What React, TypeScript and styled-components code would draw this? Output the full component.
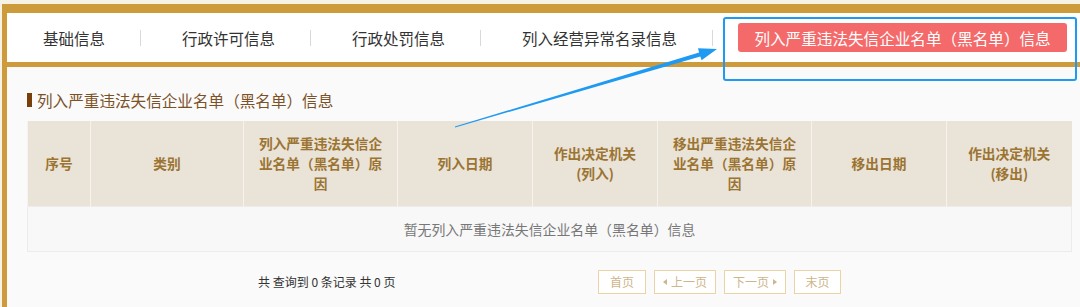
import {Fragment} from 'react';
import styled, {createGlobalStyle} from 'styled-components';

const GlobalStyle = createGlobalStyle`
  html, body {
    margin: 0;
    padding: 0;
    background: #f7f2e6;
    overflow: hidden;
  }
  body {
    font-family: "Noto Sans CJK SC", "Liberation Sans", sans-serif;
    color: #333;
  }
`;

const Page = styled.div`
  position: relative;
  width: 1080px;
  height: 307px;
  padding: 4px 0 0 2px;
  box-sizing: border-box;
`;

const Panel = styled.div`
  border-top: 9px solid #cd9b3b;
  border-left: 5px solid #cd9b3b;
  background: #fafafa;
  height: 100%;
  box-sizing: border-box;
`;

const TabBar = styled.div`
  display: flex;
  align-items: center;
  height: 49px;
  background: #fff;
  border-bottom: 5px solid #cd9b3b;
`;

const Tab = styled.div<{$first?: boolean}>`
  font-size: 15.5px;
  line-height: 20px;
  color: #333;
  white-space: nowrap;
  padding: 0 35px 0 ${p => (p.$first ? '36px' : '41px')};
`;

const Divider = styled.span`
  width: 1px;
  height: 16px;
  background: #d9d9d9;
`;

const ActiveTab = styled.div`
  margin-left: 25px;
  width: 329px;
  height: 29px;
  border-radius: 3px;
  background: #f46a6a;
  color: #fff;
  font-size: 15.6px;
  display: flex;
  align-items: center;
  justify-content: center;
  white-space: nowrap;
`;

const Content = styled.div`
  padding: 23px 9px 0 20px;
`;

const Title = styled.div`
  display: flex;
  align-items: center;
  gap: 5px;
  font-size: 15.6px;
  line-height: 20px;
  color: #7b5128;
  margin-bottom: 11px;
`;

const Marker = styled.span`
  width: 5px;
  height: 14px;
  background: #7a3f08;
`;

const Table = styled.table`
  width: 1044px;
  border-collapse: collapse;
  table-layout: fixed;
`;

const Th = styled.th<{$w: number}>`
  width: ${p => p.$w}px;
  height: 85px;
  padding: 0 12px;
  box-sizing: border-box;
  background: #eae3d8;
  border-left: 1px solid #f6f3ee;
  color: #9b7431;
  font-size: 13.7px;
  font-weight: 700;
  line-height: 20px;
  text-align: center;
`;

const EmptyCell = styled.td`
  height: 42px;
  border: 1px solid #ececec;
  background: #f8f8f8;
  color: #777;
  font-size: 13.9px;
  text-align: center;
`;

const Pager = styled.div`
  display: flex;
  align-items: center;
  margin-top: 18px;
  padding-left: 231px;
`;

const PagerInfo = styled.span`
  font-size: 12px;
  color: #333;
  width: 340px;
`;

const PagerButtons = styled.div`
  display: flex;
  gap: 8px;
`;

const PageButton = styled.span<{$w: number}>`
  width: ${p => p.$w}px;
  height: 24px;
  box-sizing: border-box;
  border: 1px solid #ead3a5;
  background: #fff;
  color: #cdb58c;
  font-size: 12px;
  display: flex;
  align-items: center;
  justify-content: center;
  gap: 4px;
`;

const Caret = styled.span<{$dir: 'left' | 'right'}>`
  width: 0;
  height: 0;
  border-top: 3px solid transparent;
  border-bottom: 3px solid transparent;
  ${p =>
    p.$dir === 'left'
      ? 'border-right: 4px solid #cdb58c;'
      : 'border-left: 4px solid #cdb58c;'}
`;

const Highlight = styled.div`
  position: absolute;
  left: 723px;
  top: 17px;
  width: 354px;
  height: 64px;
  box-sizing: border-box;
  border: 2.5px solid #1f9af2;
  border-radius: 3px;
`;

const ArrowLayer = styled.svg`
  position: absolute;
  left: 0;
  top: 0;
  pointer-events: none;
`;

const columns = [
  {w: 63, label: '序号'},
  {w: 153, label: '类别'},
  {w: 154, label: '列入严重违法失信企业名单（黑名单）原因'},
  {w: 135, label: '列入日期'},
  {w: 125, label: '作出决定机关(列入)'},
  {w: 154, label: '移出严重违法失信企业名单（黑名单）原因'},
  {w: 135, label: '移出日期'},
  {w: 125, label: '作出决定机关(移出)'},
];

const tabs = ['基础信息', '行政许可信息', '行政处罚信息', '列入经营异常名录信息'];

export default function App() {
  return (
    <>
      <GlobalStyle />
      <Page>
        <Panel>
          <TabBar>
            {tabs.map((t, i) => (
              <Fragment key={t}>
                <Tab $first={i === 0}>{t}</Tab>
                <Divider />
              </Fragment>
            ))}
            <ActiveTab>列入严重违法失信企业名单（黑名单）信息</ActiveTab>
          </TabBar>
          <Content>
            <Title>
              <Marker />
              列入严重违法失信企业名单（黑名单）信息
            </Title>
            <Table>
              <thead>
                <tr>
                  {columns.map(c => (
                    <Th key={c.label} $w={c.w}>
                      {c.label}
                    </Th>
                  ))}
                </tr>
              </thead>
              <tbody>
                <tr>
                  <EmptyCell colSpan={8}>
                    暂无列入严重违法失信企业名单（黑名单）信息
                  </EmptyCell>
                </tr>
              </tbody>
            </Table>
            <Pager>
              <PagerInfo>共 查询到 0 条记录 共 0 页</PagerInfo>
              <PagerButtons>
                <PageButton $w={48}>首页</PageButton>
                <PageButton $w={62}>
                  <Caret $dir="left" />
                  上一页
                </PageButton>
                <PageButton $w={62}>
                  下一页
                  <Caret $dir="right" />
                </PageButton>
                <PageButton $w={47}>末页</PageButton>
              </PagerButtons>
            </Pager>
          </Content>
        </Panel>
        <Highlight />
        <ArrowLayer width="1080" height="307" viewBox="0 0 1080 307">
          <polygon
            points="455.1,127.5 700.3,56.4 701.6,60.2 717,49 698,48.3 699.1,52.4 454.9,126.5"
            fill="#1f9af2"
          />
        </ArrowLayer>
      </Page>
    </>
  );
}
